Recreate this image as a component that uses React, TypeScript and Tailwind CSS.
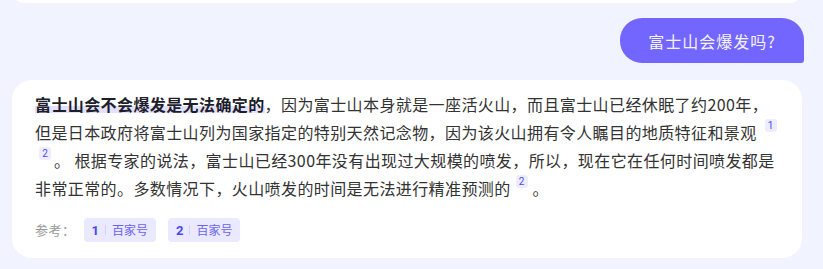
import React from "react";

function Sup({ n }: { n: string }) {
  return (
    <span className="inline-flex items-center justify-center align-top h-[13px] min-w-[12px] px-[3px] mt-[1px] rounded-[3px] bg-[#eeedff] text-[#4a47ff] text-[10px] leading-none tracking-normal font-['Roboto',sans-serif]">
      {n}
    </span>
  );
}

function Chip({ n }: { n: string }) {
  return (
    <div className="flex items-center h-[24px] rounded-[4px] bg-[#ebe9ff] pl-[8px] pr-[8px]">
      <span className="text-[13px] font-bold text-[#4a47ef] font-['Roboto',sans-serif] leading-none">{n}</span>
      <span className="mx-[6px] w-px h-[10px] bg-[#d3d0ff]" />
      <span className="text-[12px] text-[#6a63f5] leading-none">百家号</span>
    </div>
  );
}

export default function App() {
  return (
    <div className="w-[823px] h-[269px] bg-[#f1f4fe] overflow-hidden font-['Noto_Sans_CJK_SC','Noto_Sans',sans-serif]">
      <div className="mx-[12px] w-[790px] h-[24px] mt-[-21px] rounded-[20px] bg-white" />
      <div className="flex justify-end pr-[19px] mt-[15px]">
        <div className="w-[184px] h-[45px] flex items-center justify-center rounded-[22px] rounded-br-[3px] bg-[#7366ff] text-[#f3f2ff] text-[16px] tracking-[1px]">
          富士山会爆发吗?
        </div>
      </div>
      <div className="mx-[12px] w-[790px] mt-[17px] rounded-[20px] bg-white pl-[23px] pr-[20px] pt-[10px] pb-[16px]">
        <p className="text-[16px] leading-[28px] tracking-[0.4px] text-[#333333]">
          <span className="font-semibold text-[#1d1d2b] bg-[linear-gradient(transparent_58%,#e4e1ff_58%,#e4e1ff_86%,transparent_86%)]">
            富士山会不会爆发是无法确定的
          </span>
          ，因为富士山本身就是一座活火山，而且富士山已经休眠了约200年，但是日本政府将富士山列为国家指定的特别天然记念物，因为该火山拥有令人瞩目的地质特征和景观
          <span className="ml-[8px]"><Sup n="1" /></span>
          <span className="ml-[4px]"><Sup n="2" /></span>
          <span className="ml-[3px]">。</span> 根据专家的说法，富士山已经300年没有出现过大规模的喷发，所以，现在它在任何时间喷发都是非常正常的。多数情况下，火山喷发的时间是无法进行精准预测的
          <span className="ml-[5px]"><Sup n="2" /></span>
          <span className="ml-[5px]">。</span>
        </p>
        <div className="flex items-center mt-[16px]">
          <span className="text-[13px] text-[#9a9a9a] mr-[8px] tracking-[0.5px]">参考：</span>
          <div className="flex items-center gap-[12px]">
            <Chip n="1" />
            <Chip n="2" />
          </div>
        </div>
      </div>
    </div>
  );
}
